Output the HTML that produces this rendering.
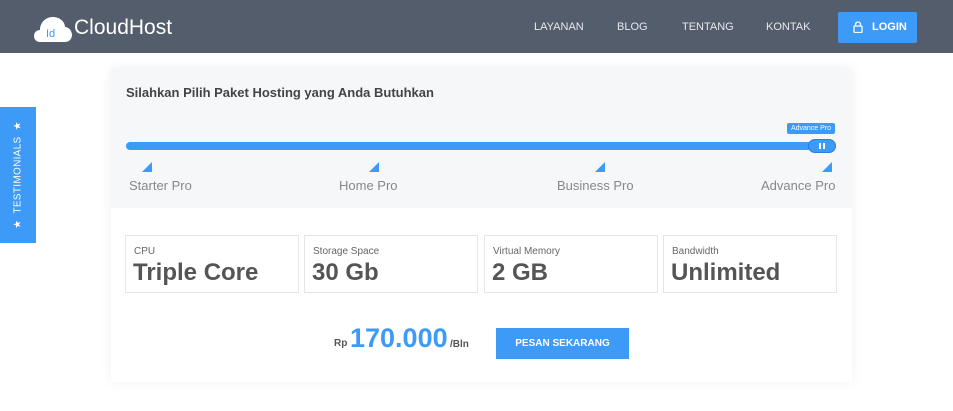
<!DOCTYPE html>
<html><head><style>
*{margin:0;padding:0;box-sizing:border-box}
body{width:953px;height:411px;background:#fff;font-family:"Liberation Sans",sans-serif;position:relative;overflow:hidden}
.hdr{position:absolute;left:0;top:0;width:953px;height:53px;background:#545d6b}
.nav{position:absolute;top:21px;color:#e6e8ec;font-size:11px;letter-spacing:0}
.login{position:absolute;left:838px;top:12px;width:79px;height:31px;background:#3d9bf7;border-radius:2px;color:#fff;font-size:11px;font-weight:bold;line-height:31px;padding-left:34px}
.card{position:absolute;left:111px;top:68px;width:741px;height:314px;background:#fff;box-shadow:0 0 12px rgba(0,0,0,.06)}
.top{position:absolute;left:0;top:0;width:741px;height:140px;background:#f6f7f9}
.ttl{position:absolute;left:15px;top:17px;font-size:13px;font-weight:bold;color:#444}
.bar{position:absolute;left:15px;top:74px;width:710px;height:8px;background:#3d9bf7;border-radius:4px}
.knob{position:absolute;left:697px;top:71px;width:28px;height:14px;background:#3d9bf7;border:1px solid #2a7fd6;border-radius:7px}
.tip{position:absolute;left:676px;top:55px;width:48px;height:11px;background:#3d9bf7;border-radius:2px;color:#fff;font-size:7px;text-align:center;line-height:11px}
.tri{position:absolute;top:94px;width:0;height:0;border-left:10px solid transparent;border-bottom:10px solid #3d9bf7}
.lab{position:absolute;top:110px;font-size:13px;color:#888}
.box{position:absolute;top:167px;width:174px;height:58px;border:1px solid #e6e6e6}
.box .s{position:absolute;left:8px;top:10px;font-size:10px;color:#666}
.box .b{position:absolute;left:7px;top:23px;font-size:24px;font-weight:bold;color:#555}
.side{position:absolute;left:0;top:107px;width:36px;height:136px;background:#3d9bf7}
.side span{position:absolute;left:18px;top:68px;transform:translate(-50%,-50%) rotate(-90deg);color:#fff;font-size:10px;white-space:nowrap;letter-spacing:.3px}
</style></head><body>
<div class="hdr">
 <svg style="position:absolute;left:34px;top:16px" width="38" height="26" viewBox="0 0 38 26"><path d="M6 26C2 26 0 23 0 20 0 16 3 14 6 14 6 6 12 1 19 1 26 1 31 6 31 11 35 11 38 15 38 19 38 23 35 26 31 26Z" fill="#fff"/><text x="12" y="21" font-size="11" fill="#3d9bf7" font-family="Liberation Sans">Id</text></svg>
 <div style="position:absolute;left:74px;top:16px;font-size:21px;color:#fff">CloudHost</div>
 <div class="nav" style="left:534px">LAYANAN</div>
 <div class="nav" style="left:617px">BLOG</div>
 <div class="nav" style="left:682px">TENTANG</div>
 <div class="nav" style="left:766px">KONTAK</div>
 <div class="login"><svg style="position:absolute;left:15px;top:9px" width="10" height="12" viewBox="0 0 10 12"><path d="M2.5 5V3.5a2.5 2.5 0 015 0V5" fill="none" stroke="#fff" stroke-width="1.3"/><rect x="1" y="5" width="8" height="6.5" rx="1" fill="none" stroke="#fff" stroke-width="1.3"/></svg>LOGIN</div>
</div>
<div class="side"><span>★ &nbsp;TESTIMONIALS&nbsp; ★</span></div>
<div class="card">
 <div class="top"></div>
 <div class="ttl">Silahkan Pilih Paket Hosting yang Anda Butuhkan</div>
 <div class="bar"></div>
 <div class="tip">Advance Pro</div>
 <div class="knob"><span style="position:absolute;left:10px;top:3px;width:2px;height:6px;background:#fff"></span><span style="position:absolute;left:14px;top:3px;width:2px;height:6px;background:#fff"></span></div>
 <div class="tri" style="left:31px"></div><div class="lab" style="left:18px">Starter Pro</div>
 <div class="tri" style="left:258px"></div><div class="lab" style="left:228px">Home Pro</div>
 <div class="tri" style="left:484px"></div><div class="lab" style="left:446px">Business Pro</div>
 <div class="tri" style="left:711px"></div><div class="lab" style="left:650px">Advance Pro</div>
 <div class="box" style="left:14px"><div class="s">CPU</div><div class="b">Triple Core</div></div>
 <div class="box" style="left:193px"><div class="s">Storage Space</div><div class="b">30 Gb</div></div>
 <div class="box" style="left:373px"><div class="s">Virtual Memory</div><div class="b">2 GB</div></div>
 <div class="box" style="left:552px"><div class="s">Bandwidth</div><div class="b">Unlimited</div></div>
 <div style="position:absolute;left:223px;top:270px;font-size:10px;font-weight:bold;color:#555">Rp</div>
 <div style="position:absolute;left:239px;top:255px;font-size:27px;font-weight:bold;color:#3d9bf7">170.000</div>
 <div style="position:absolute;left:339px;top:271px;font-size:10px;font-weight:bold;color:#555">/Bln</div>
 <div style="position:absolute;left:385px;top:260px;width:133px;height:31px;background:#3d9bf7;color:#fff;font-size:10px;font-weight:bold;text-align:center;line-height:31px">PESAN SEKARANG</div>
</div>
</body></html>
